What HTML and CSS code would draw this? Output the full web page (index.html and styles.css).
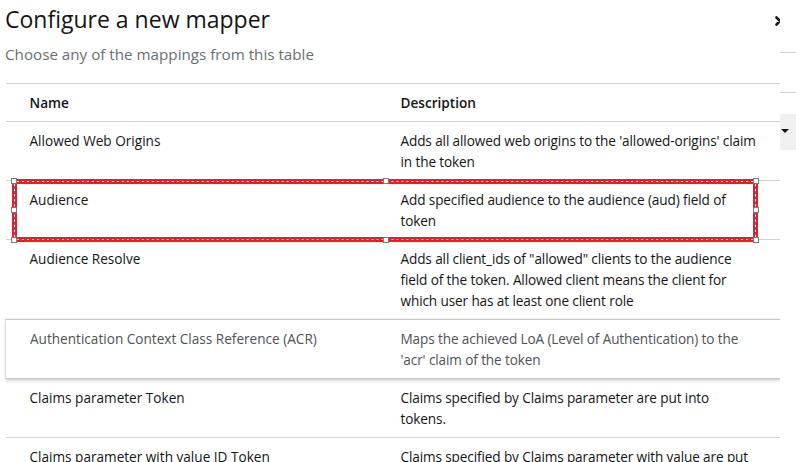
FILE: index.html
```html
<!DOCTYPE html>
<html lang="en">
<head>
<meta charset="utf-8">
<title>Configure a new mapper</title>
<link rel="stylesheet" href="styles.css">
</head>
<body>
<div class="page">
  <div class="modal">
    <svg class="close" width="10" height="10" viewBox="0 0 10 10" aria-hidden="true">
      <path d="M1.5 1.5 L8.5 8.5 M8.5 1.5 L1.5 8.5" stroke="#151515" stroke-width="2.6" stroke-linecap="round"/>
    </svg>
    <header class="head">
      <h1 class="title">Configure a new mapper</h1>
      <p class="sub">Choose any of the mappings from this table</p>
    </header>
    <div class="table-wrap">
      <table class="tbl">
        <colgroup><col class="c-name"><col class="c-desc"></colgroup>
        <thead>
          <tr><th class="cell-name">Name</th><th class="cell-desc">Description</th></tr>
        </thead>
        <tbody>
          <tr>
            <td class="cell-name">Allowed Web Origins</td>
            <td class="cell-desc">Adds all allowed web origins to the 'allowed-origins' claim<br>in the token</td>
          </tr>
          <tr>
            <td class="cell-name">Audience</td>
            <td class="cell-desc">Add specified audience to the audience (aud) field of<br>token</td>
          </tr>
          <tr>
            <td class="cell-name">Audience Resolve</td>
            <td class="cell-desc">Adds all client_ids of "allowed" clients to the audience<br>field of the token. Allowed client means the client for<br>which user has at least one client role</td>
          </tr>
          <tr class="raised">
            <td class="cell-name">Authentication Context Class Reference (ACR)</td>
            <td class="cell-desc">Maps the achieved LoA (Level of Authentication) to the<br>'acr' claim of the token</td>
          </tr>
          <tr>
            <td class="cell-name">Claims parameter Token</td>
            <td class="cell-desc">Claims specified by Claims parameter are put into<br>tokens.</td>
          </tr>
          <tr>
            <td class="cell-name">Claims parameter with value ID Token</td>
            <td class="cell-desc">Claims specified by Claims parameter with value are put<br>into tokens.</td>
          </tr>
        </tbody>
      </table>
      <div class="select-box">
        <span class="h h-tl"></span><span class="h h-tm"></span><span class="h h-tr"></span>
        <span class="h h-ml"></span><span class="h h-mr"></span>
        <span class="h h-bl"></span><span class="h h-bm"></span><span class="h h-br"></span>
      </div>
    </div>
  </div>
  <aside class="side">
    <div class="side-line l1"></div>
    <div class="side-line l2"></div>
    <div class="side-select"><span class="caret"></span></div>
  </aside>
</div>
</body>
</html>
```
FILE: styles.css
```css
* { box-sizing: border-box; }
html, body { margin: 0; padding: 0; background: #fff; }
body {
  font-family: "Open Sans", "Liberation Sans", sans-serif;
  color: #151515;
  width: 796px;
  height: 462px;
  overflow: hidden;
}
.page {
  display: flex;
  height: 462px;
  overflow: hidden;
}
.modal {
  position: relative;
  width: 780px;
  flex: 0 0 780px;
  padding-left: 5px;
  overflow: hidden;
}
.close {
  position: absolute;
  left: 775px;
  top: 16px;
}
.head { padding-top: 4px; }
.title {
  margin: 0;
  font-size: 23px;
  line-height: 30px;
  font-weight: 400;
  color: #151515;
}
.sub {
  margin: 8px 0 17px;
  font-size: 15.2px;
  line-height: 24px;
  color: #6a6e73;
}
.table-wrap { position: relative; }
.tbl {
  width: 775px;
  table-layout: fixed;
  border-collapse: collapse;
  font-size: 13.6px;
  line-height: 21px;
}
.c-name { width: 379px; }
.c-desc { width: 396px; }
.tbl tr { border-top: 1px solid #d2d2d2; }
.tbl thead tr { border-bottom: 1px solid #d2d2d2; }
.tbl th, .tbl td {
  vertical-align: top;
  text-align: left;
  white-space: nowrap;
  padding-top: 8px;
  padding-bottom: 8px;
}
.tbl th { font-weight: 600; color: #151515; }
.tbl td.cell-desc { letter-spacing: -0.12px; }
.cell-name { padding-left: 24px; padding-right: 16px; }
.cell-desc { padding-left: 16px; padding-right: 24px; }
.tbl tr.raised {
  box-shadow: 0 -1px 2px rgba(3, 3, 3, 0.16), 0 2px 3px rgba(3, 3, 3, 0.16), -1px 0 1px rgba(3, 3, 3, 0.08);
  border-top-color: #c7c7c7;
  border-left: 1px solid #e0e0e0;
}
.tbl tr.raised td { color: #4f5255; }
.tbl tr.raised + tr { border-top-color: #c7c7c7; }

/* selection overlay drawn over the "Audience" row */
.select-box {
  position: absolute;
  left: 7px;
  top: 96px;
  width: 746px;
  height: 63px;
  border: 2px solid #e41f26;
  pointer-events: none;
}
.select-box::before {
  content: "";
  position: absolute;
  inset: 0;
  border: 1px dashed #2a62d2;
}
.select-box::after {
  content: "";
  position: absolute;
  inset: 1px;
  border: 2px solid #e41f26;
}
.h {
  position: absolute;
  width: 6px;
  height: 6px;
  background: #fff;
  border: 1px solid #7a7a7a;
  z-index: 2;
}
.h-tl { left: -3px; top: -3px; }
.h-tm { left: 369px; top: -3px; }
.h-tr { right: -3px; top: -3px; }
.h-ml { left: -3px; top: 26px; }
.h-mr { right: -3px; top: 26px; }
.h-bl { left: -3px; bottom: -3px; }
.h-bm { left: 369px; bottom: -3px; }
.h-br { right: -3px; bottom: -3px; }

/* background page strip at right */
.side {
  flex: 1 1 auto;
  position: relative;
  background: #fff;
}
.side-line {
  position: absolute;
  left: 0;
  right: 0;
  height: 1px;
  background: #d2d2d2;
}
.l1 { top: 52px; }
.l2 { top: 92px; }
.side-select {
  position: absolute;
  left: 0;
  right: 0;
  top: 114px;
  height: 36px;
  background: #f0f0f0;
}
.caret {
  position: absolute;
  left: 1px;
  top: 15px;
  width: 0;
  height: 0;
  border-left: 4px solid transparent;
  border-right: 4px solid transparent;
  border-top: 4px solid #151515;
}
```
